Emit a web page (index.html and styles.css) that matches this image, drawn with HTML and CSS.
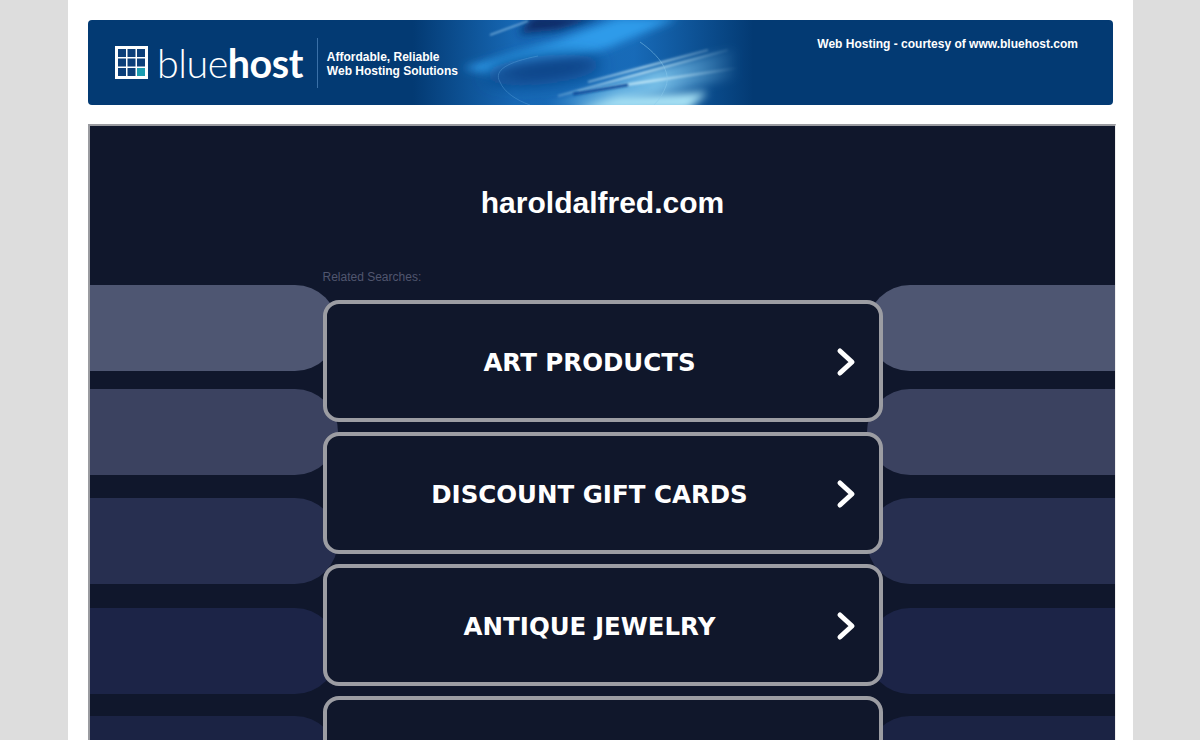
FILE: index.html
```html
<!DOCTYPE html>
<html lang="en">
<head>
    <meta charset="UTF-8" />
    <title>haroldalfred.com</title>
    <link rel="stylesheet" href="styles.css">
</head>
<body>
    <div class="page">
        <!-- hosting banner -->
        <div class="banner">
            <svg class="banner-art" width="1025" height="85" viewBox="0 0 1025 85" aria-hidden="true">
                <defs>
                    <linearGradient id="glow" x1="0" y1="0" x2="1" y2="0">
                        <stop offset="0" stop-color="#1a70c0" stop-opacity="0" />
                        <stop offset="0.3" stop-color="#1a70c0" stop-opacity="0.85" />
                        <stop offset="0.65" stop-color="#1a70c0" stop-opacity="0.9" />
                        <stop offset="1" stop-color="#1a70c0" stop-opacity="0" />
                    </linearGradient>
                    <linearGradient id="ray" gradientUnits="userSpaceOnUse" x1="440" y1="0" x2="650" y2="0">
                        <stop offset="0" stop-color="#cfeefa" stop-opacity="0.1" />
                        <stop offset="0.55" stop-color="#cfeefa" stop-opacity="0.8" />
                        <stop offset="1" stop-color="#cfeefa" stop-opacity="0" />
                    </linearGradient>
                    <linearGradient id="band" gradientUnits="userSpaceOnUse" x1="470" y1="0" x2="650" y2="0">
                        <stop offset="0" stop-color="#6dbdea" stop-opacity="0.4" />
                        <stop offset="0.55" stop-color="#82c9ee" stop-opacity="0.9" />
                        <stop offset="1" stop-color="#82c9ee" stop-opacity="0" />
                    </linearGradient>
                    <filter id="blur-lg" x="-30%" y="-60%" width="160%" height="220%"><feGaussianBlur stdDeviation="8" /></filter>
                    <filter id="blur-md" x="-30%" y="-60%" width="160%" height="220%"><feGaussianBlur stdDeviation="4" /></filter>
                    <filter id="blur-sm" x="-10%" y="-100%" width="120%" height="300%"><feGaussianBlur stdDeviation="1.2" /></filter>
                </defs>
                <rect x="325" y="0" width="340" height="85" fill="url(#glow)" />
                <path d="M445 -4H515L470 10L430 14Z" fill="#0a2c66" filter="url(#blur-md)" />
                <path d="M375 48L470 20L530 -2H590L520 28L420 58Z" fill="#2f9bea" filter="url(#blur-md)" />
                <ellipse cx="455" cy="50" rx="58" ry="14" transform="rotate(-6 455 50)" fill="#0b4489" filter="url(#blur-lg)" />
                <path d="M460 85L540 56L650 28L650 58L570 74L520 85Z" fill="url(#band)" filter="url(#blur-md)" />
                <path d="M470 76L640 30" stroke="url(#ray)" stroke-width="2" filter="url(#blur-sm)" />
                <path d="M490 72L650 48" stroke="url(#ray)" stroke-width="2.5" filter="url(#blur-sm)" />
                <path d="M500 62L620 30" stroke="url(#ray)" stroke-width="2" filter="url(#blur-sm)" />
                <path d="M485 74L540 65" stroke="#0f4f9d" stroke-width="3" filter="url(#blur-sm)" />
                <path d="M480 90L530 76L620 72L600 90Z" fill="#a8e2f5" filter="url(#blur-md)" />
                <path d="M402 15L440 1" stroke="#8cbfe6" stroke-width="1.5" opacity="0.8" filter="url(#blur-sm)" />
                <path d="M552 22C572 36 583 52 578 66C575 74 571 80 566 85" fill="none" stroke="#8ccbee" stroke-width="1" opacity="0.5" />
                <path d="M412 62C405 50 420 42 450 36" fill="none" stroke="#5ea4dc" stroke-width="1" opacity="0.4" />
                <path d="M412 62C416 72 428 80 442 85" fill="none" stroke="#5ea4dc" stroke-width="1" opacity="0.4" />
            </svg>
            <div class="logo">
                <svg class="logo-mark" width="33" height="33" viewBox="0 0 33 33" aria-hidden="true">
                    <rect x="0" y="0" width="33" height="33" fill="#fff" />
                    <rect x="3" y="3" width="8" height="8" fill="#0c3f79" />
                    <rect x="12.5" y="3" width="8" height="8" fill="#0c3f79" />
                    <rect x="22" y="3" width="8" height="8" fill="#0c3f79" />
                    <rect x="3" y="12.5" width="8" height="8" fill="#0c3f79" />
                    <rect x="12.5" y="12.5" width="8" height="8" fill="#0c3f79" />
                    <rect x="22" y="12.5" width="8" height="8" fill="#0c3f79" />
                    <rect x="3" y="22" width="8" height="8" fill="#0c3f79" />
                    <rect x="12.5" y="22" width="8" height="8" fill="#0c3f79" />
                    <rect x="22" y="22" width="8" height="8" fill="#1c9db0" />
                </svg>
                <span class="logo-text"><span class="logo-thin">blue</span><b>host</b></span>
            </div>
            <div class="tagline">Affordable, Reliable<br>Web Hosting Solutions</div>
            <div class="courtesy">Web Hosting - courtesy of www.bluehost.com</div>
        </div>

        <!-- parked domain frame -->
        <div class="frame">
            <div class="blobs">
                <div class="blob-row blob-1"><span></span><span></span></div>
                <div class="blob-row blob-2"><span></span><span></span></div>
                <div class="blob-row blob-3"><span></span><span></span></div>
                <div class="blob-row blob-4"><span></span><span></span></div>
                <div class="blob-row blob-5"><span></span><span></span></div>
            </div>
            <h1 class="domain">haroldalfred.com</h1>
            <div class="searches">
                <div class="related">Related Searches:</div>
                <a class="search-btn" href="#">
                    <span>ART PRODUCTS</span>
                    <svg class="chevron" width="20" height="30" viewBox="0 0 20 30"><path d="M4 4L16 15L4 26" /></svg>
                </a>
                <a class="search-btn" href="#">
                    <span>DISCOUNT GIFT CARDS</span>
                    <svg class="chevron" width="20" height="30" viewBox="0 0 20 30"><path d="M4 4L16 15L4 26" /></svg>
                </a>
                <a class="search-btn" href="#">
                    <span>ANTIQUE JEWELRY</span>
                    <svg class="chevron" width="20" height="30" viewBox="0 0 20 30"><path d="M4 4L16 15L4 26" /></svg>
                </a>
                <a class="search-btn" href="#"></a>
            </div>
        </div>
    </div>
</body>
</html>
```

FILE: styles.css
```css
html, body {
    margin: 0;
    padding: 0;
    height: 100%;
    overflow: hidden;
}
body {
    background: #dddddd;
    font-family: "Liberation Sans", Arial, sans-serif;
}
.page {
    box-sizing: border-box;
    width: 1065px;
    height: 740px;
    margin-left: 68px;
    padding: 20px 17px 0 20px;
    background: #fff;
    overflow: hidden;
}

/* Banner */
.banner {
    position: relative;
    display: flex;
    align-items: center;
    width: 1025px;
    height: 85px;
    background: #033a73;
    border-radius: 4px;
    overflow: hidden;
    color: #fff;
}
.banner-art {
    position: absolute;
    left: 0;
    top: 0;
}
.logo {
    position: relative;
    display: flex;
    align-items: center;
    gap: 9px;
    height: 50px;
    margin-left: 27px;
    padding-right: 14px;
    border-right: 1px solid #3a70a8;
}
.logo-text {
    font-family: Lato, "Open Sans", sans-serif;
    font-size: 39.5px;
    letter-spacing: -0.5px;
    line-height: 50px;
}
.logo-thin {
    font-weight: 300;
}
.logo-text b {
    font-weight: 700;
}
.tagline {
    position: relative;
    margin: 2px 0 0 9px;
    font-size: 12px;
    font-weight: bold;
    line-height: 14px;
}
.courtesy {
    position: absolute;
    top: 17px;
    right: 35px;
    font-size: 12px;
    font-weight: bold;
    line-height: 14px;
}

/* Frame */
.frame {
    position: relative;
    width: 1025px;
    height: 620px;
    margin-top: 19px;
    background: #10172c;
    border-top: 2px solid #9a9ba0;
    border-left: 2px solid #9a9ba0;
    border-right: 1px solid #eeeeee;
    overflow: hidden;
}
.blobs {
    position: absolute;
    left: 0;
    right: 0;
    top: 159px;
    display: flex;
    flex-direction: column;
}
.blob-row {
    display: flex;
    justify-content: space-between;
    height: 86px;
}
.blob-row span {
    width: 248px;
    border-radius: 0 43px 43px 0;
}
.blob-row span:last-child {
    border-radius: 43px 0 0 43px;
}
.blob-1 { margin-bottom: 18px; }
.blob-2 { margin-bottom: 23px; }
.blob-3 { margin-bottom: 24px; }
.blob-4 { margin-bottom: 22px; }
.blob-1 span { background: #4e5672; }
.blob-2 span { background: #3b4260; }
.blob-3 span { background: #272f50; }
.blob-4 span { background: #1c2447; }
.blob-5 span { background: #1b2344; }
.domain {
    position: relative;
    margin: 0;
    padding-top: 59px;
    height: 35px;
    font-size: 30px;
    line-height: 35px;
    font-weight: bold;
    text-align: center;
    color: #fff;
}
.searches {
    position: relative;
    display: flex;
    flex-direction: column;
    gap: 10px;
    width: 560px;
    margin: 0 auto;
    padding-top: 50px;
}
.related {
    margin-bottom: 6px;
    font-size: 12px;
    line-height: 14px;
    color: #50566f;
}
.search-btn {
    position: relative;
    display: flex;
    align-items: center;
    justify-content: center;
    box-sizing: border-box;
    height: 122px;
    padding: 2px 26px 0 0;
    background: #10172b;
    border: 4px solid #9c9da3;
    border-radius: 16px;
    font-family: "DejaVu Sans", Verdana, sans-serif;
    font-size: 24.5px;
    font-weight: bold;
    color: #fff;
    text-decoration: none;
}
.chevron {
    position: absolute;
    top: 43px;
    right: 23px;
}
.chevron path {
    fill: none;
    stroke: #fff;
    stroke-width: 5;
    stroke-linecap: round;
    stroke-linejoin: round;
}
```
